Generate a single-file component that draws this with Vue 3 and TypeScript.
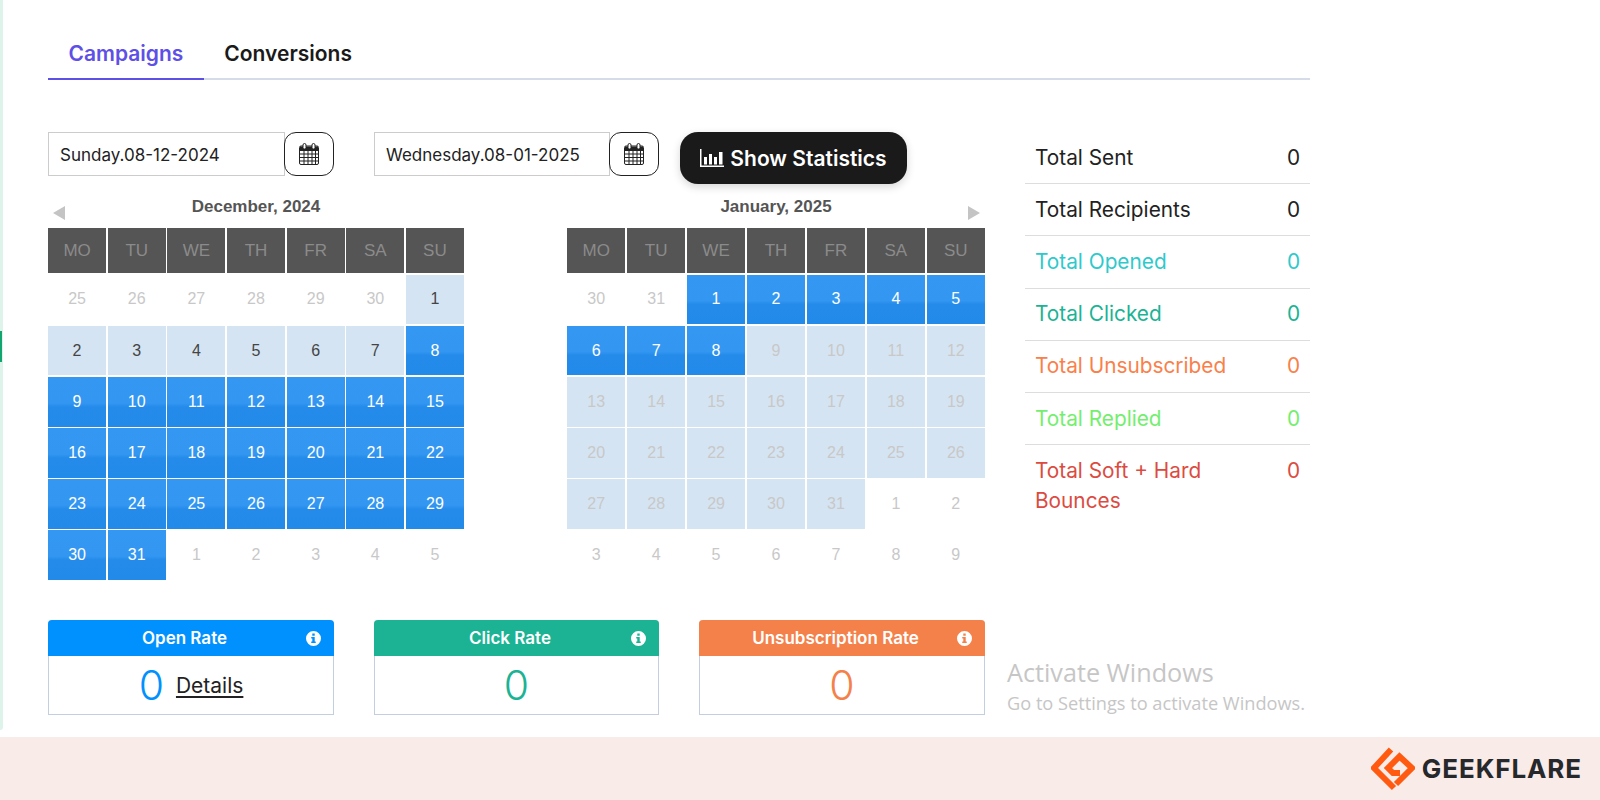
<script setup lang="ts">
type CellKind = 'muted' | 'range' | 'selected' | 'faded'

interface DayCell {
  label: number
  kind: CellKind
}

const weekdays = ['MO', 'TU', 'WE', 'TH', 'FR', 'SA', 'SU']

function run(from: number, to: number, kind: CellKind): DayCell[] {
  const cells: DayCell[] = []
  for (let label = from; label <= to; label += 1) {
    cells.push({ label, kind })
  }
  return cells
}

const calendars = [
  {
    title: 'December, 2024',
    arrow: 'prev',
    days: [
      ...run(25, 30, 'muted'),
      ...run(1, 7, 'range'),
      ...run(8, 31, 'selected'),
      ...run(1, 5, 'muted'),
    ],
  },
  {
    title: 'January, 2025',
    arrow: 'next',
    days: [
      ...run(30, 31, 'muted'),
      ...run(1, 8, 'selected'),
      ...run(9, 31, 'faded'),
      ...run(1, 9, 'muted'),
    ],
  },
]

const stats = [
  { label: 'Total Sent', tone: 'ink' },
  { label: 'Total Recipients', tone: 'ink' },
  { label: 'Total Opened', tone: 'opened' },
  { label: 'Total Clicked', tone: 'clicked' },
  { label: 'Total Unsubscribed', tone: 'unsub' },
  { label: 'Total Replied', tone: 'replied' },
  { label: 'Total Soft + Hard Bounces', tone: 'bounced' },
]

const rates = [
  { label: 'Open Rate', tone: 'blue', details: true },
  { label: 'Click Rate', tone: 'green', details: false },
  { label: 'Unsubscription Rate', tone: 'orange', details: false },
]
</script>

<template>
  <div class="page">
    <div class="body">
      <div class="rail"><span class="rail__mark"></span></div>

      <main class="main">
        <nav class="tabs">
          <a class="tab tab--active">Campaigns</a>
          <a class="tab">Conversions</a>
        </nav>

        <div class="layout">
          <section class="left">
            <div class="dates">
              <div class="date">
                <div class="date__input">Sunday.08-12-2024</div>
                <button type="button" class="date__btn">
                  <svg width="20" height="22" viewBox="0 0 20 22">
                    <rect x="0.5" y="3" width="19" height="18.5" rx="1.5" fill="#fff" stroke="#222" />
                    <path d="M1 3.5h18v4.5H1z" fill="#222" />
                    <path d="M1 11h18M1 14.5h18M1 18h18M5 8v13M9 8v13M13 8v13M16.5 8v13" stroke="#222" stroke-width="1" fill="none" />
                    <rect x="4" y="0.5" width="3" height="5.5" rx="1.5" fill="#fff" stroke="#222" />
                    <rect x="13" y="0.5" width="3" height="5.5" rx="1.5" fill="#fff" stroke="#222" />
                  </svg>
                </button>
              </div>
              <div class="date date--second">
                <div class="date__input">Wednesday.08-01-2025</div>
                <button type="button" class="date__btn">
                  <svg width="20" height="22" viewBox="0 0 20 22">
                    <rect x="0.5" y="3" width="19" height="18.5" rx="1.5" fill="#fff" stroke="#222" />
                    <path d="M1 3.5h18v4.5H1z" fill="#222" />
                    <path d="M1 11h18M1 14.5h18M1 18h18M5 8v13M9 8v13M13 8v13M16.5 8v13" stroke="#222" stroke-width="1" fill="none" />
                    <rect x="4" y="0.5" width="3" height="5.5" rx="1.5" fill="#fff" stroke="#222" />
                    <rect x="13" y="0.5" width="3" height="5.5" rx="1.5" fill="#fff" stroke="#222" />
                  </svg>
                </button>
              </div>
              <button type="button" class="show">
                <svg width="24" height="20" viewBox="0 0 24 20">
                  <path d="M0.75 1v17.25H24" stroke="#fff" stroke-width="1.5" fill="none" />
                  <path d="M4 9h3v7.5H4zM9 6h3v10.5H9zM14 9h3v7.5h-3zM19 4h3.5v12.5H19z" fill="#fff" />
                </svg>
                Show Statistics
              </button>
            </div>

            <div class="calendars">
              <div v-for="cal in calendars" :key="cal.title" class="calendar">
                <div class="calendar__head">
                  <span v-if="cal.arrow === 'prev'" class="arrow arrow--prev"></span>
                  <span v-else class="arrow-space"></span>
                  <h4 class="calendar__title">{{ cal.title }}</h4>
                  <span v-if="cal.arrow === 'next'" class="arrow arrow--next"></span>
                  <span v-else class="arrow-space"></span>
                </div>
                <div class="grid">
                  <div v-for="day in weekdays" :key="day" class="weekday">{{ day }}</div>
                  <div
                    v-for="(cell, i) in cal.days"
                    :key="i"
                    class="cell"
                    :class="`cell--${cell.kind}`"
                  >
                    {{ cell.label }}
                  </div>
                </div>
              </div>
            </div>

            <div class="rates">
              <div v-for="rate in rates" :key="rate.label" class="rate" :class="`rate--${rate.tone}`">
                <div class="rate__head">
                  <span class="rate__label">{{ rate.label }}</span>
                  <svg class="rate__info" width="15" height="15" viewBox="0 0 16 16">
                    <path
                      fill="#fff"
                      fill-rule="evenodd"
                      d="M8 0a8 8 0 1 1 0 16A8 8 0 0 1 8 0zM6.7 2.7v2.4h2.6V2.7zM5.6 6.4v1.5h1.1v3.2H5.6v1.6h4.8v-1.6H9.3V6.4z"
                    />
                  </svg>
                </div>
                <div class="rate__body">
                  <span class="rate__value">0</span>
                  <a v-if="rate.details" class="rate__link">Details</a>
                </div>
              </div>
            </div>
          </section>

          <aside class="stats">
            <div v-for="s in stats" :key="s.label" class="stat" :class="`stat--${s.tone}`">
              <span class="stat__label">{{ s.label }}</span>
              <span>0</span>
            </div>
          </aside>
        </div>
      </main>
    </div>

    <footer class="footer">
      <div class="brand">
        <svg width="44" height="44" viewBox="5 4 44 44">
          <path d="M25 6.500 8 25l20 20" fill="none" stroke="#ff5a0f" stroke-width="6" />
          <path d="M34 30h-7l-5-5 11.500-11.500L46 25 30 41" fill="none" stroke="#ff5a0f" stroke-width="6" />
        </svg>
        <span class="brand__name">GEEKFLARE</span>
      </div>
    </footer>

    <div class="activate">
      <div class="activate__title">Activate Windows</div>
      <div class="activate__sub">Go to Settings to activate Windows.</div>
    </div>
  </div>
</template>

<style scoped>
.page {
  position: relative;
  display: flex;
  flex-direction: column;
  height: 800px;
  overflow: hidden;
  background: #fff;
  font-family: Inter, 'Liberation Sans', sans-serif;
  color: #222;
}

.body {
  display: flex;
  height: 737px;
}

.rail {
  position: relative;
  flex: none;
  width: 0;
  height: 728px;
  border-right: 3px solid #def3ea;
  border-bottom: 2px solid #def3ea;
  border-bottom-right-radius: 6px;
  box-sizing: content-box;
}

.rail__mark {
  position: absolute;
  top: 331px;
  left: 0;
  width: 2px;
  height: 31px;
  background: #13a56f;
}

.main {
  flex: none;
  width: 1262px;
  margin-left: 45px;
  padding-top: 33px;
}

.tabs {
  display: flex;
  height: 47px;
  box-sizing: border-box;
  border-bottom: 2px solid #d5dbe8;
}

.tab {
  height: 47px;
  box-sizing: border-box;
  padding: 0 20.500px;
  font-size: 21px;
  font-weight: 600;
  line-height: 41px;
  color: #1a1a1a;
}

.tab--active {
  color: #5e50e6;
  border-bottom: 2px solid #5e50e6;
}

.layout {
  display: flex;
  gap: 40px;
  padding-top: 52px;
}

.left {
  flex: none;
  width: 937px;
}

.dates {
  display: flex;
  align-items: flex-start;
}

.date {
  display: flex;
  width: 286px;
}

.date--second {
  width: 285px;
  margin-left: 40px;
}

.date__input {
  flex: 1;
  height: 44px;
  box-sizing: border-box;
  padding-left: 11px;
  border: 1px solid #ccc;
  font-size: 17px;
  line-height: 44px;
  color: #222;
}

.date__btn {
  display: flex;
  flex: none;
  align-items: center;
  justify-content: center;
  width: 50px;
  height: 44px;
  margin-left: -1px;
  padding: 0;
  border: 1.500px solid #222;
  border-radius: 12px;
  background: #fff;
}

.show {
  display: flex;
  align-items: center;
  gap: 6px;
  justify-content: center;
  width: 227px;
  height: 52px;
  margin-left: 21px;
  padding: 0;
  border: none;
  border-radius: 18px;
  background: #1a1a1a;
  box-shadow: 0 3px 8px rgba(0, 0, 0, 0.16);
  color: #fff;
  font-family: inherit;
  font-size: 21px;
  font-weight: 600;
}

.calendars {
  display: flex;
  justify-content: space-between;
  margin-top: 8px;
}

.calendar {
  width: 418px;
}

.calendar:first-child {
  width: 416px;
}

.calendar__head {
  display: grid;
  grid-template-columns: 24px 1fr 24px;
  height: 36px;
}

.calendar__title {
  margin: 0;
  padding-top: 6px;
  text-align: center;
  font-family: 'Liberation Sans', Arial, sans-serif;
  font-size: 17px;
  font-weight: 700;
  line-height: 18px;
  color: #555;
}

.arrow {
  width: 0;
  height: 0;
  margin-top: 14px;
  border-top: 7px solid transparent;
  border-bottom: 7px solid transparent;
}

.arrow--prev {
  margin-left: 5px;
  border-right: 12px solid #c4c4c4;
}

.arrow--next {
  margin-left: 7px;
  border-left: 12px solid #c4c4c4;
}

.grid {
  display: grid;
  grid-template-columns: repeat(7, 1fr);
  grid-template-rows: 45px repeat(6, 49.7px);
  gap: 1.5px;
  font-family: 'Liberation Sans', Arial, sans-serif;
  font-size: 16px;
}

.weekday {
  display: flex;
  align-items: center;
  justify-content: center;
  background: #555;
  color: #8b8b8b;
  font-size: 17px;
}

.cell {
  display: flex;
  align-items: center;
  justify-content: center;
}

.cell--muted {
  color: #c8c8c8;
}

.cell--range {
  background: #d5e4f2;
  color: #444;
}

.cell--faded {
  background: #d5e4f2;
  color: #c8c8c8;
}

.cell--selected {
  background: linear-gradient(#3498f3 0%, #3397f2 52%, #248bea 60%, #228ae9 100%);
  color: #fff;
}

.rates {
  display: grid;
  grid-template-columns: 286px 285px 286px;
  gap: 40px;
  margin-top: 40px;
}

.rate {
  height: 95px;
  box-sizing: border-box;
  border: 1px solid #c3cfe0;
  border-top: none;
  border-radius: 4px 4px 0 0;
}

.rate__head {
  display: flex;
  align-items: center;
  height: 36px;
  margin: 0 -1px;
  padding-right: 13px;
  border-radius: 4px 4px 0 0;
  color: #fff;
  font-size: 17px;
  font-weight: 600;
}

.rate__label {
  flex: 1;
  text-align: center;
}

.rate__info {
  margin-left: -15px;
}

.rate__body {
  display: flex;
  align-items: center;
  justify-content: center;
  gap: 12px;
  height: 58px;
}

.rate__value {
  font-size: 41px;
  font-weight: 300;
}

.rate__link {
  font-size: 21px;
  color: #222;
  text-decoration: underline;
  text-underline-offset: 3px;
}

.rate--blue .rate__head {
  background: #0091ff;
}

.rate--blue .rate__value {
  color: #0091ff;
}

.rate--green .rate__head {
  background: #1bb394;
}

.rate--green .rate__value {
  color: #1bb394;
}

.rate--orange .rate__head {
  background: #f5814a;
}

.rate--orange .rate__value {
  color: #f5814a;
}

.stats {
  flex: none;
  width: 285px;
}

.stat {
  display: flex;
  justify-content: space-between;
  gap: 16px;
  padding: 10.600px 10px;
  border-bottom: 1px solid #ddd;
  font-size: 20.800px;
  line-height: 30px;
}

.stat:last-child {
  border-bottom: none;
}

.stat__label {
  flex: 1;
}

.stat--ink {
  color: #222;
}

.stat--opened {
  color: #2ec9cb;
}

.stat--clicked {
  color: #1bb394;
}

.stat--unsub {
  color: #f9804a;
}

.stat--replied {
  color: #74ee6f;
}

.stat--bounced {
  color: #dc4b41;
}

.footer {
  display: flex;
  flex: none;
  align-items: center;
  justify-content: flex-end;
  height: 63px;
  padding-right: 18px;
  background: #f9ebe8;
}

.brand {
  display: flex;
  align-items: center;
  gap: 7px;
}

.brand__name {
  font-size: 26px;
  font-weight: 700;
  letter-spacing: 0.9px;
  color: #26282b;
}

.activate {
  position: absolute;
  top: 656px;
  left: 1007px;
  font-family: 'Open Sans', sans-serif;
  color: #c6c6c6;
}

.activate__title {
  font-size: 25.200px;
  line-height: 32px;
}

.activate__sub {
  font-size: 18.200px;
  line-height: 30px;
}
</style>
